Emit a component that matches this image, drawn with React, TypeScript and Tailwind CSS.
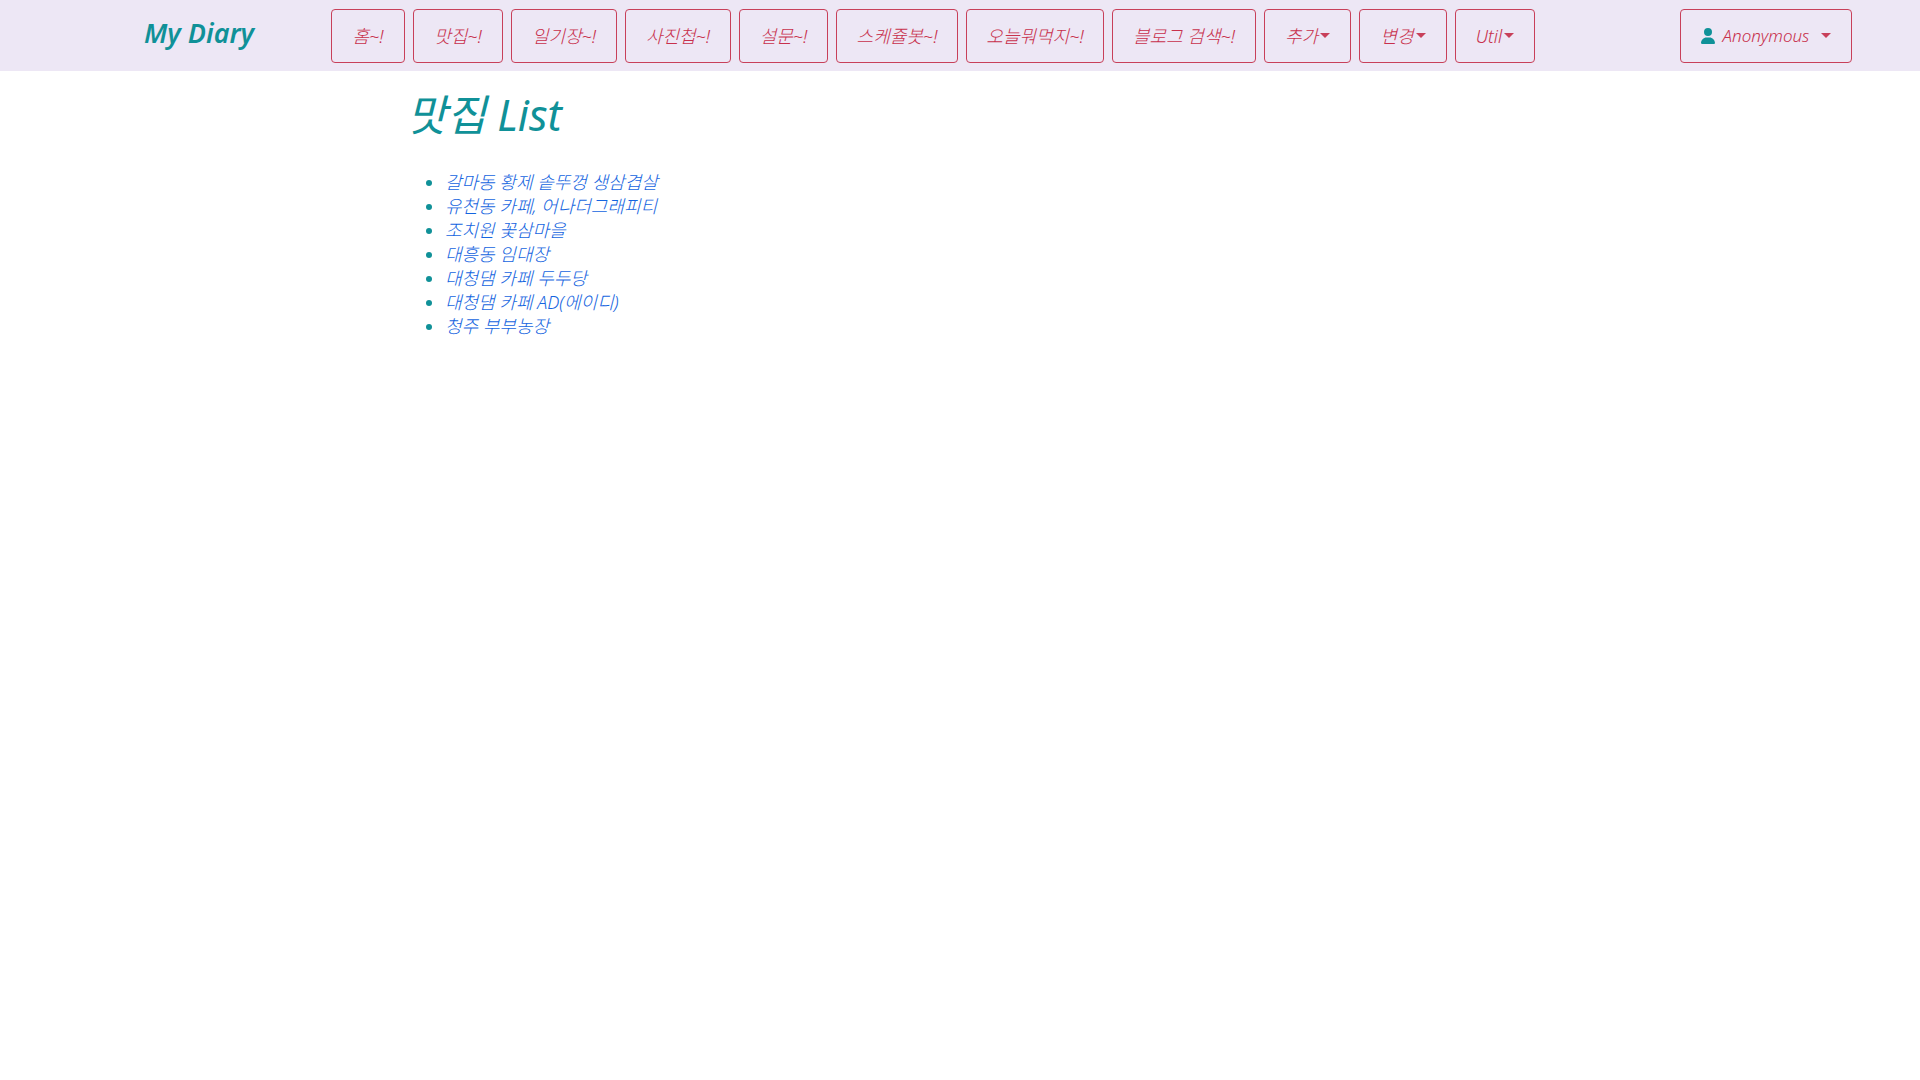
import React from "react";

const navItems = [
  { label: "홈~!", width: "w-[74px]" },
  { label: "맛집~!", width: "w-[90px]" },
  { label: "일기장~!", width: "w-[106px]" },
  { label: "사진첩~!", width: "w-[106px]" },
  { label: "설문~!", width: "w-[89px]" },
  { label: "스케쥴봇~!", width: "w-[122px]" },
  { label: "오늘뭐먹지~!", width: "w-[138px]" },
  { label: "블로그 검색~!", width: "w-[144px]" },
  { label: "추가", width: "w-[87px]", menu: true },
  { label: "변경", width: "w-[88px]", menu: true },
  { label: "Util", width: "w-[80px]", menu: true },
];

const places = [
  "갈마동 황제 솥뚜껑 생삼겹살",
  "유천동 카페, 어나더그래피티",
  "조치원 꽃삼마을",
  "대흥동 임대장",
  "대청댐 카페 두두당",
  "대청댐 카페 AD(에이디)",
  "청주 부부농장",
];

const box =
  "flex h-[54px] shrink-0 items-center justify-center rounded border border-[#c8405a] text-[#c8304c]";

function Caret() {
  return (
    <span className="mb-0.5 inline-block border-x-[5px] border-t-[5px] border-x-transparent border-t-[#c8405a]" />
  );
}

export default function App() {
  return (
    <div className="min-h-screen bg-white font-['Noto_Sans','Noto_Sans_CJK_KR',sans-serif] text-lg font-light text-[#109198] italic">
      <nav className="flex items-start bg-[#ede7f5] pt-[9px] pr-[68px] pb-2 pl-36">
        <a href="#" className="mt-1 w-[187px] shrink-0 text-[27px] leading-10 font-semibold">
          My Diary
        </a>
        <div className="flex gap-2">
          {navItems.map((item) =>
            item.menu ? (
              <button key={item.label} type="button" className={`${box} ${item.width} gap-0.5`}>
                {item.label}
                <Caret />
              </button>
            ) : (
              <a key={item.label} href="#" className={`${box} ${item.width}`}>
                {item.label}
              </a>
            ),
          )}
        </div>
        <button type="button" className={`${box} ml-auto w-[172px] gap-2 text-[17px]`}>
          <svg viewBox="0 0 448 512" className="h-4 w-3.5 fill-[#109198]" aria-hidden="true">
            <path d="M224 256A128 128 0 1 0 224 0a128 128 0 1 0 0 256zm-45.700 48C79.800 304 0 383.800 0 482.300C0 498.700 13.300 512 29.700 512H418.300c16.400 0 29.700-13.300 29.700-29.700C448 383.800 368.200 304 269.700 304H178.300z" />
          </svg>
          <span className="mr-1">Anonymous</span>
          <Caret />
        </button>
      </nav>
      <main className="mx-auto max-w-[1106px] pt-3.5">
        <h1 className="text-[43px] leading-[60px] font-normal">맛집 List</h1>
        <ul className="mt-[25px] list-disc pl-[38px] leading-6">
          {places.map((place) => (
            <li key={place}>
              <a href="#" className="text-[#1464e0]">
                {place}
              </a>
            </li>
          ))}
        </ul>
      </main>
    </div>
  );
}
